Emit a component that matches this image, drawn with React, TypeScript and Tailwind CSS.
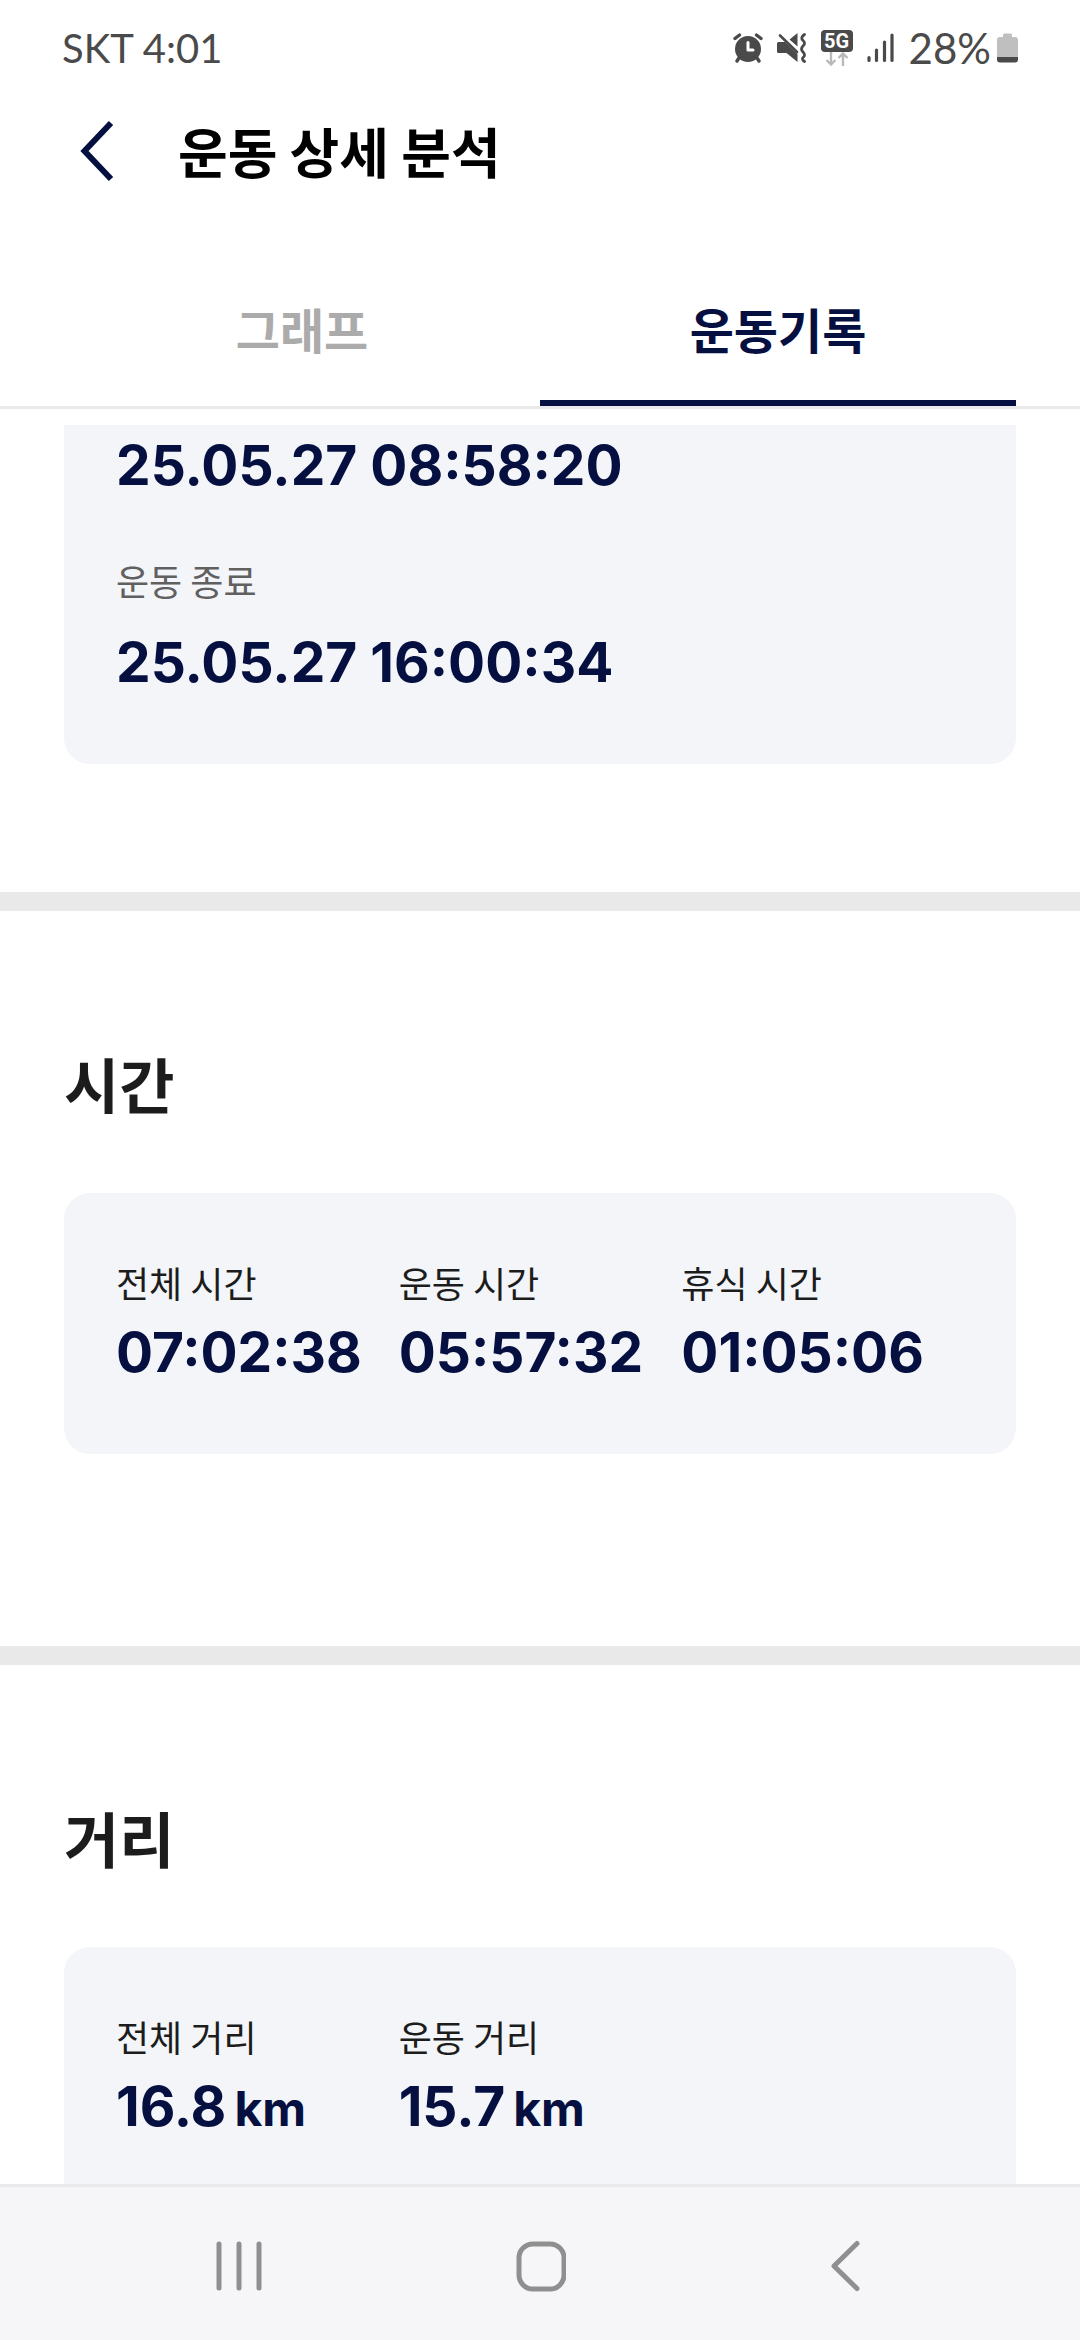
import type { ReactNode } from "react";

type Stat = { label: string; value: string; unit?: string };

const timeStats: Stat[] = [
  { label: "전체 시간", value: "07:02:38" },
  { label: "운동 시간", value: "05:57:32" },
  { label: "휴식 시간", value: "01:05:06" },
];

const distanceStats: Stat[] = [
  { label: "전체 거리", value: "16.8", unit: "km" },
  { label: "운동 거리", value: "15.7", unit: "km" },
];

const AlarmIcon = () => (
  <svg width="30" height="30" viewBox="0 0 30 30" aria-hidden="true">
    <circle cx="15" cy="16" r="13" fill="#4a4a4a" />
    <path
      d="M2 5.500L6.500 2M28 5.500L23.500 2M6 25L4 28M24 25L26 28"
      stroke="#4a4a4a"
      strokeWidth="3.400"
      strokeLinecap="round"
    />
    <path
      d="M15 9.500V17H20"
      fill="none"
      stroke="#fff"
      strokeWidth="3"
      strokeLinecap="round"
      strokeLinejoin="round"
    />
  </svg>
);

const MuteIcon = () => (
  <svg width="30" height="30" viewBox="0 0 30 30" aria-hidden="true">
    <path d="M1.500 9H8L20.500 21V29L9.500 20H1.500Q0 20 0 18.500V10.500Q0 9 1.500 9Z" fill="#4a4a4a" />
    <path d="M20.500 0V13.500L12.500 6.500Z" fill="#4a4a4a" />
    <path d="M3 2.500L20 19" stroke="#4a4a4a" strokeWidth="2.600" strokeLinecap="round" />
    <path
      d="M27.500 1.500Q23 4.500 26 7.500Q29 10 26 13Q23 16 26 19Q29 22 26 24.500Q24.500 26.500 27.500 28.500"
      fill="none"
      stroke="#4a4a4a"
      strokeWidth="2.800"
      strokeLinecap="round"
    />
  </svg>
);

const NetworkIcon = () => (
  <div className="flex w-8 flex-col items-center">
    <span className="flex h-[22px] w-8 items-center justify-center rounded-[4px] bg-[#4a4a4a] font-['Roboto',sans-serif] text-[20px] leading-none font-bold text-white">
      5G
    </span>
    <svg width="24" height="14" viewBox="0 0 24 14" aria-hidden="true">
      <path
        d="M6 0V12.500M1.500 8L6 12.500L10.500 8M18 14V1.500M13.500 6L18 1.500L22.500 6"
        fill="none"
        stroke="#b9b9b9"
        strokeWidth="2.400"
      />
    </svg>
  </div>
);

const SignalIcon = () => (
  <svg width="28" height="30" viewBox="0 0 28 30" aria-hidden="true">
    <path
      d="M2 24.500V27.500M9.500 17V27.500M17.500 9V27.500M25 2V27.500"
      stroke="#4a4a4a"
      strokeWidth="3.200"
      strokeLinecap="round"
    />
  </svg>
);

const BatteryIcon = () => (
  <svg width="21" height="30" viewBox="0 0 21 30" aria-hidden="true">
    <path d="M6 2Q6 .5 7.500 .5H13.500Q15 .5 15 2V4H18Q21 4 21 7V24H0V7Q0 4 3 4H6Z" fill="#bfbfbf" />
    <path d="M0 24H21V26.500Q21 29.500 18 29.500H3Q0 29.500 0 26.500Z" fill="#4a4a4a" />
  </svg>
);

const StatusBar = () => (
  <div className="flex h-24 shrink-0 items-center justify-between px-[62px] font-['Lato',sans-serif] text-[40px] leading-none text-[#4a4a4a]">
    <span>SKT 4:01</span>
    <div className="flex items-center gap-1.5">
      <div className="flex items-center gap-3.5">
        <AlarmIcon />
        <MuteIcon />
        <NetworkIcon />
        <SignalIcon />
        <span className="text-[42px]">28%</span>
      </div>
      <BatteryIcon />
    </div>
  </div>
);

const Header = () => (
  <header className="flex h-[110px] shrink-0 items-center gap-16 px-20">
    <button type="button" aria-label="뒤로">
      <svg width="34" height="62" viewBox="0 0 34 62" aria-hidden="true">
        <path d="M31 3L4.500 31L31 59" fill="none" stroke="#051041" strokeWidth="6" />
      </svg>
    </button>
    <h1 className="font-['Noto_Sans_CJK_KR',sans-serif] text-[54px] leading-[72px] font-bold text-black">
      운동 상세 분석
    </h1>
  </header>
);

const Tabs = () => (
  <nav className="mt-[58px] flex shrink-0 border-b-[3px] border-[#e9e9e9] px-16 text-[48px] leading-[72px] font-bold">
    <button type="button" className="flex-1 border-b-[6px] border-transparent py-8 text-[#ababab]">
      그래프
    </button>
    <button type="button" className="flex-1 border-b-[6px] border-[#051041] py-8 text-[#051041]">
      운동기록
    </button>
  </nav>
);

const StatItem = ({ label, value, unit }: Stat) => (
  <div className="flex flex-col gap-3.5">
    <dt className="font-['Noto_Sans_CJK_KR',sans-serif] text-[36px] leading-[48px] text-[#1c1c1c]">{label}</dt>
    <dd className="text-[55px] leading-[64px] font-bold whitespace-nowrap text-[#051041]">
      {value}
      {unit && <span className="ml-2 text-[48px]">{unit}</span>}
    </dd>
  </div>
);

const Divider = () => <div className="h-[19px] bg-[#e9e9e9]" />;

const Section = ({ title, children }: { title: string; children: ReactNode }) => (
  <section className="px-16 pt-[132px] pb-48">
    <h2 className="text-[60px] leading-[88px] font-bold text-[#1c1c1c]">{title}</h2>
    <dl className="mt-[62px] grid grid-cols-3 rounded-[26px] bg-[#f3f5f9] px-[52px] pt-[65px] pb-[70px]">
      {children}
    </dl>
  </section>
);

const SystemNav = () => (
  <div className="grid h-[156px] shrink-0 grid-cols-3 items-center border-t-[3px] border-[#e8e9e9] bg-[#f6f6f8] px-[88px] pt-1">
    <button type="button" aria-label="최근 앱" className="flex justify-center">
      <svg width="52" height="52" viewBox="0 0 52 52" aria-hidden="true">
        <path d="M6 4V48M26 4V48M46 4V48" stroke="#8f8f8f" strokeWidth="5" strokeLinecap="round" />
      </svg>
    </button>
    <button type="button" aria-label="홈" className="flex justify-center">
      <svg width="52" height="52" viewBox="0 0 52 52" aria-hidden="true">
        <rect x="5" y="4" width="45" height="45" rx="14" fill="none" stroke="#8f8f8f" strokeWidth="5" />
      </svg>
    </button>
    <button type="button" aria-label="뒤로 가기" className="flex justify-center">
      <svg width="52" height="52" viewBox="0 0 52 52" aria-hidden="true">
        <path
          d="M42 3.500L19 26L42 48.500"
          fill="none"
          stroke="#8f8f8f"
          strokeWidth="5"
          strokeLinecap="round"
          strokeLinejoin="round"
        />
      </svg>
    </button>
  </div>
);

export default function App() {
  return (
    <div className="flex h-screen flex-col bg-white font-['Inter','Noto_Sans_CJK_KR',sans-serif]">
      <StatusBar />
      <Header />
      <Tabs />
      <main className="mt-4 min-h-0 flex-1 overflow-y-auto [scrollbar-width:none]">
        <section className="px-16 pb-32">
          <dl className="rounded-b-[26px] bg-[#f3f5f9] px-[52px] pt-2 pb-[70px]">
            <dd className="text-[55px] leading-[64px] font-bold text-[#051041]">25.05.27 08:58:20</dd>
            <dt className="mt-[59px] font-['Noto_Sans_CJK_KR',sans-serif] text-[36px] leading-[48px] text-[#606060]">
              운동 종료
            </dt>
            <dd className="mt-[26px] text-[55px] leading-[64px] font-bold text-[#051041]">25.05.27 16:00:34</dd>
          </dl>
        </section>
        <Divider />
        <Section title="시간">
          {timeStats.map((stat) => (
            <StatItem key={stat.label} {...stat} />
          ))}
        </Section>
        <Divider />
        <Section title="거리">
          {distanceStats.map((stat) => (
            <StatItem key={stat.label} {...stat} />
          ))}
        </Section>
      </main>
      <SystemNav />
    </div>
  );
}
